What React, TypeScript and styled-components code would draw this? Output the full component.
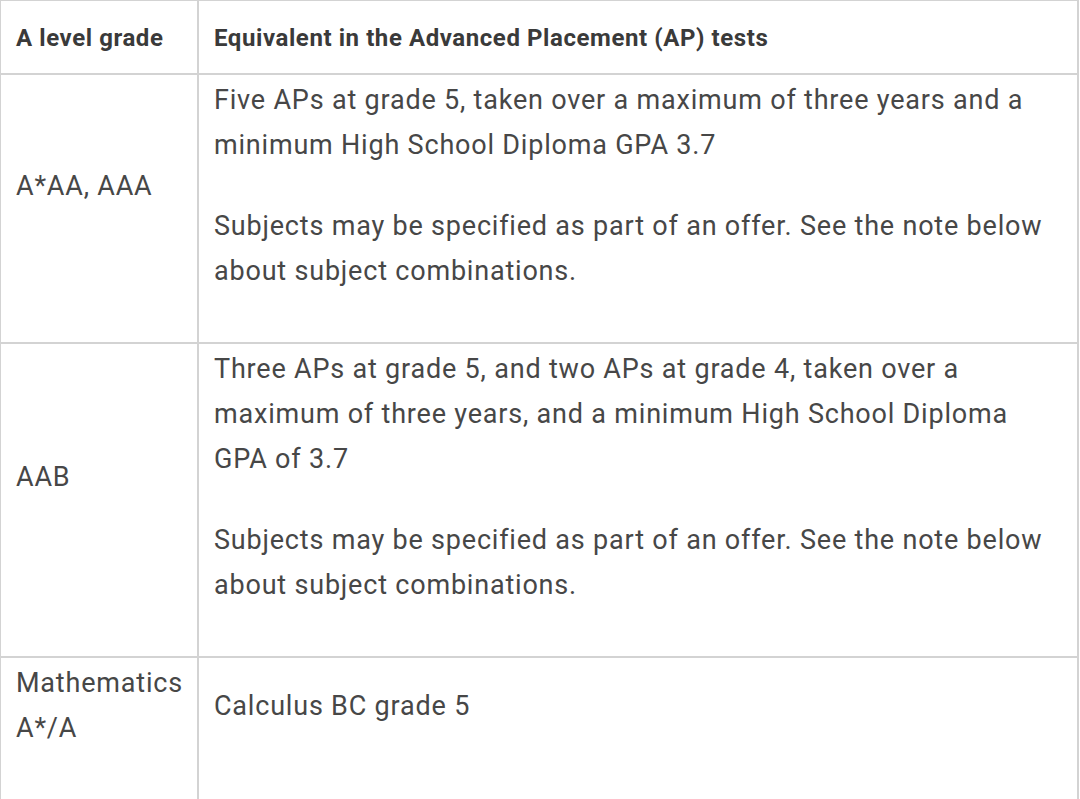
import { createGlobalStyle } from 'styled-components';
import styled from 'styled-components';

const GlobalStyle = createGlobalStyle`
  html, body {
    margin: 0;
    padding: 0;
    background: #ffffff;
  }
  body {
    font-family: Roboto, 'Noto Sans', Arial, sans-serif;
    color: #454545;
    overflow: hidden;
  }
`;

const Table = styled.table`
  width: 1080px;
  margin: -1px 0 0 -1px;
  border-collapse: collapse;
  table-layout: fixed;
`;

const GradeCol = styled.col`
  width: 198px;
`;

const HeadCell = styled.th`
  border: 2px solid #d3d3d3;
  padding: 20px 15px 18px 15px;
  font-size: 24px;
  line-height: 34px;
  letter-spacing: 0.58px;
  font-weight: 700;
  color: #3a3a3a;
  text-align: left;
  vertical-align: middle;
  white-space: nowrap;
`;

const Cell = styled.td`
  border: 2px solid #d3d3d3;
  padding: 3px 15px 12px 15px;
  font-size: 27px;
  line-height: 45px;
  letter-spacing: 0.8px;
  color: #474747;
  vertical-align: middle;
`;

const Para = styled.p`
  margin: 0 0 36px 0;
`;

type Row = { grade: string; paragraphs: string[] };

const rows: Row[] = [
  {
    grade: 'A*AA, AAA',
    paragraphs: [
      'Five APs at grade 5, taken over a maximum of three years and a minimum High School Diploma GPA 3.7',
      'Subjects may be specified as part of an offer. See the note below about subject combinations.',
    ],
  },
  {
    grade: 'AAB',
    paragraphs: [
      'Three APs at grade 5, and two APs at grade 4, taken over a maximum of three years, and a minimum High School Diploma GPA of 3.7',
      'Subjects may be specified as part of an offer. See the note below about subject combinations.',
    ],
  },
  {
    grade: 'Mathematics A*/A',
    paragraphs: ['Calculus BC grade 5'],
  },
];

export default function App() {
  return (
    <>
      <GlobalStyle />
      <Table>
        <colgroup>
          <GradeCol />
          <col />
        </colgroup>
        <thead>
          <tr>
            <HeadCell>A level grade</HeadCell>
            <HeadCell>Equivalent in the Advanced Placement (AP) tests</HeadCell>
          </tr>
        </thead>
        <tbody>
          {rows.map((row) => (
            <tr key={row.grade}>
              <Cell>
                <Para>{row.grade}</Para>
              </Cell>
              <Cell>
                {row.paragraphs.map((text, i) => (
                  <Para key={i}>{text}</Para>
                ))}
              </Cell>
            </tr>
          ))}
        </tbody>
      </Table>
    </>
  );
}
